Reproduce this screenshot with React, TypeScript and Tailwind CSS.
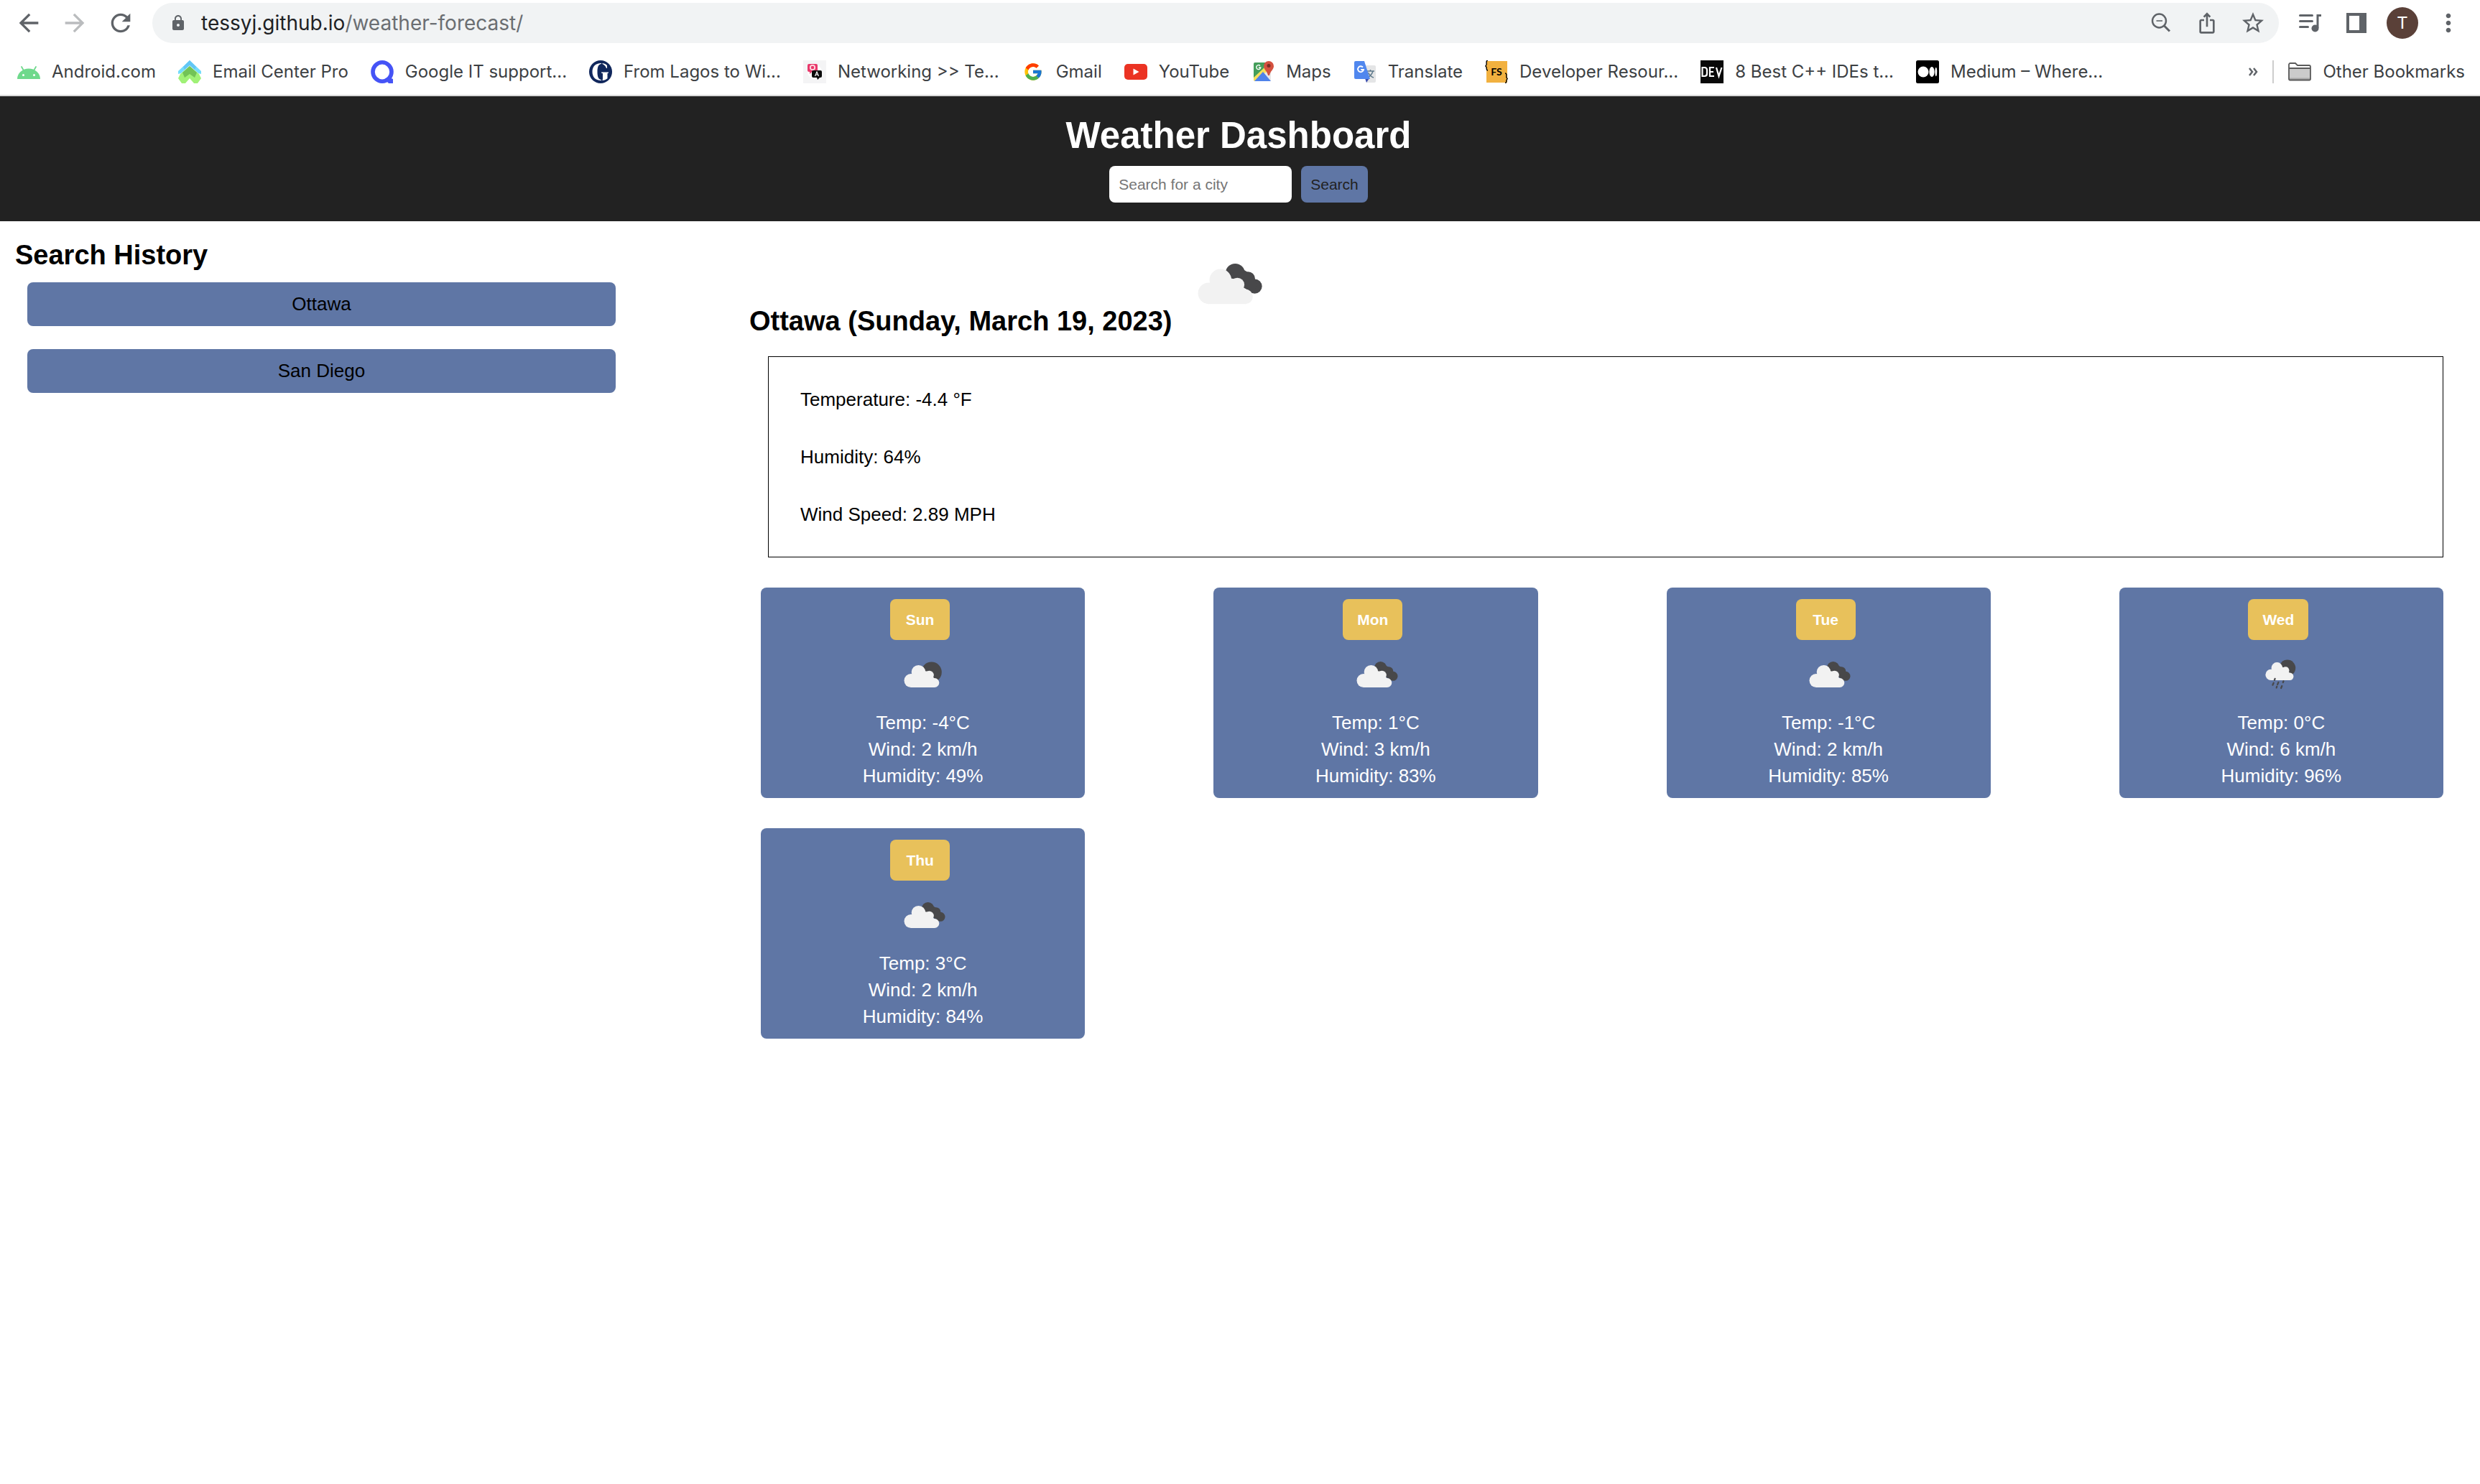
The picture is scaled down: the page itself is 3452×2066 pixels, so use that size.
import type { ReactNode } from "react";
import {
  MdArrowBack,
  MdArrowForward,
  MdIosShare,
  MdLock,
  MdMoreVert,
  MdRefresh,
  MdStarOutline,
} from "react-icons/md";
import { FcGoogle } from "react-icons/fc";

/* ---------- bookmark favicons (32 x 32) ---------- */

function Favicon({ children }: { children: ReactNode }) {
  return (
    <svg viewBox="0 0 32 32" className="size-8 shrink-0" aria-hidden="true">
      {children}
    </svg>
  );
}

const AndroidIcon = () => (
  <Favicon>
    <path d="M0 26a16 14.500 0 0 1 32 0z" fill="#6fd98c" />
    <path d="M6 9l4 7M26 9l-4 7" stroke="#6fd98c" strokeWidth="1.800" strokeLinecap="round" />
    <circle cx="8.500" cy="20.500" r="1.500" fill="#fff" />
    <circle cx="23.500" cy="20.500" r="1.500" fill="#fff" />
  </Favicon>
);

const EmailCenterIcon = () => (
  <Favicon>
    <path d="M16 0L0 15v4l4-1L16 7l12 11 4 1v-4z" fill="#74dcfb" />
    <path d="M16 0L7 9l2 4 7-6 7 6 2-4z" fill="#62c6f5" />
    <path d="M16 8L3 19l-3 6 5 7h5l6-7 6 7h5l5-7-3-6z" fill="#a0f177" />
    <path d="M16 8L6 17l3 7 7-5 7 5 3-7z" fill="#72c357" />
  </Favicon>
);

const CourseraIcon = () => (
  <Favicon>
    <ellipse cx="16" cy="16" rx="13" ry="13.200" fill="none" stroke="#4553f6" strokeWidth="5.600" />
    <path d="M19 26l7-2 5 2v6h-6z" fill="#4553f6" />
  </Favicon>
);

const GuardianIcon = () => (
  <Favicon>
    <circle cx="16" cy="16" r="16" fill="#10275c" />
    <path
      d="M17 4C8 4 4.500 9.500 4.500 16S8 28 17 28v-1c-4-.500-5.500-4-5.500-11S13 5.500 17 5zM18.500 4c3 .300 5 1.500 6.500 3v4h-1c-1.200-3.300-3-5-5.500-6zM17 16.500h10v1l-1.500.800v7C23.500 27 21 27.800 18.500 28v-1l.500-.500v-8.200l-2-.800z"
      fill="#fff"
    />
  </Favicon>
);

const NetworkingIcon = () => (
  <Favicon>
    <rect width="32" height="32" fill="#f4f4f5" />
    <circle cx="16" cy="16" r="10" fill="#fff" />
    <path d="M8 5h10a2 2 0 0 1 2 2v7a2 2 0 0 1-2 2h-6l-3 3v-3H8a2 2 0 0 1-2-2V7a2 2 0 0 1 2-2z" fill="#e8386b" />
    <circle cx="13" cy="10" r="3.200" fill="none" stroke="#ffd9e0" strokeWidth="1.800" />
    <path d="M14 14h10a2 2 0 0 1 2 2v6a2 2 0 0 1-2 2h-1l-3 3-1-3h-5a2 2 0 0 1-2-2v-6a2 2 0 0 1 2-2z" fill="#0a0a0a" />
    <path d="M16.500 22l2.500-6 2.500 6M17.500 20h3" fill="none" stroke="#fff" strokeWidth="1.200" />
  </Favicon>
);

const GmailIcon = () => (
  <span className="flex size-8 shrink-0 items-center justify-center">
    <FcGoogle className="size-7" aria-hidden="true" />
  </span>
);

const YouTubeIcon = () => (
  <Favicon>
    <rect y="5" width="32" height="22" rx="5" fill="#eb3323" />
    <path d="M12.500 11.500v9l8-4.500z" fill="#fff" />
  </Favicon>
);

const MapsIcon = () => (
  <Favicon>
    <path d="M5 3h16l6 12v12a2 2 0 0 1-2 2H5a2 2 0 0 1-2-2V5a2 2 0 0 1 2-2z" fill="#e8e8e8" />
    <path d="M5 3h16v8L3 27V5a2 2 0 0 1 2-2z" fill="#449e5a" />
    <path d="M18 10l4 5L5 29a2 2 0 0 1-2-2v-3z" fill="#f6df5c" />
    <path d="M16 16L4 29h23z" fill="#4f82ea" />
    <path d="M24 1a7 7 0 0 1 7 7c0 5-5 7-6 13h-2c-1-6-6-8-6-13a7 7 0 0 1 7-7z" fill="#d4513f" />
    <circle cx="24" cy="7.500" r="2.500" fill="#7c2d25" />
    <path d="M12 7.500a3 3 0 1 0 .800 2.500H10" fill="none" stroke="#fff" strokeWidth="1.400" />
  </Favicon>
);

const TranslateIcon = () => (
  <Favicon>
    <path d="M12 7h17a2 2 0 0 1 2 2v20a2 2 0 0 1-2 2H18z" fill="#e4e5e6" />
    <path d="M18 15h11M23.500 13v2M27 15c-1 4-4 7-7 9M20.500 17c1.500 3 4 6 7.500 7" fill="none" stroke="#5f7a8c" strokeWidth="1.500" />
    <path d="M16 25h6l-4 6z" fill="#3c4fb0" />
    <path d="M3 1h12l8 25H3a2 2 0 0 1-2-2V3a2 2 0 0 1 2-2z" fill="#5087ee" />
    <path d="M13 9.500a4 4 0 1 0 1 3.500h-3.800" fill="none" stroke="#fff" strokeWidth="1.900" />
  </Favicon>
);

const DeveloperIcon = () => (
  <Favicon>
    <rect x="2" y="1" width="29" height="30" fill="#f2b13f" />
    <path d="M4 0C1 0 2.500 4 2 6L.800 8 2 9.500C2.500 12 1.500 14 4 14" fill="none" stroke="#000" strokeWidth="1.400" />
    <path d="M28 18c3 0 1.500 4 2 6l1.200 1.500L30 27.500c-.500 2 .500 4-2 4" fill="none" stroke="#000" strokeWidth="1.400" />
    <text x="16" y="21" textAnchor="middle" fontSize="14" className="fill-black font-[Lato] font-bold">
      FS
    </text>
  </Favicon>
);

const DevIcon = () => (
  <Favicon>
    <rect width="32" height="32" fill="#090909" />
    <path
      d="M2.500 10v12h3q3.500 0 3.500-3.500v-5Q9 10 5.500 10zM19 10h-6v12h6M13 16h5M22 10l3.500 12L29.500 10"
      fill="none"
      stroke="#fff"
      strokeWidth="2.200"
    />
  </Favicon>
);

const MediumIcon = () => (
  <Favicon>
    <rect width="32" height="32" rx="2.500" fill="#000" />
    <circle cx="10" cy="16" r="7.500" fill="#fff" />
    <ellipse cx="22" cy="16" rx="3.600" ry="7" fill="#fff" />
    <ellipse cx="27.800" cy="16" rx="1.400" ry="6.200" fill="#fff" />
  </Favicon>
);

const FolderIcon = () => (
  <Favicon>
    <path d="M1 6a2 2 0 0 1 2-2h7l3 3h16a2 2 0 0 1 2 2v17a1.500 1.500 0 0 1-1.500 1.500h-27A1.500 1.500 0 0 1 1 26z" fill="#fff" />
    <path d="M1 11h30v16H1z" fill="#cbcbcb" />
    <path d="M1 24.500h30V27H1z" fill="#a9a9a9" />
    <path
      d="M1 6a2 2 0 0 1 2-2h7l3 3h16a2 2 0 0 1 2 2v17a1.500 1.500 0 0 1-1.500 1.500h-27A1.500 1.500 0 0 1 1 26zM1 11h30"
      fill="none"
      stroke="#5a5a5a"
      strokeWidth="1.800"
    />
  </Favicon>
);

const bookmarks = [
  { label: "Android.com", Icon: AndroidIcon },
  { label: "Email Center Pro", Icon: EmailCenterIcon },
  { label: "Google IT support...", Icon: CourseraIcon },
  { label: "From Lagos to Wi...", Icon: GuardianIcon },
  { label: "Networking >> Te...", Icon: NetworkingIcon },
  { label: "Gmail", Icon: GmailIcon },
  { label: "YouTube", Icon: YouTubeIcon },
  { label: "Maps", Icon: MapsIcon },
  { label: "Translate", Icon: TranslateIcon },
  { label: "Developer Resour...", Icon: DeveloperIcon },
  { label: "8 Best C++ IDEs t...", Icon: DevIcon },
  { label: "Medium – Where...", Icon: MediumIcon },
];

/* ---------- browser chrome ---------- */

function ToolButton({ label, children }: { label: string; children: ReactNode }) {
  return (
    <button type="button" aria-label={label} className="flex h-14 w-16 shrink-0 items-center justify-center">
      {children}
    </button>
  );
}

function Toolbar() {
  return (
    <div className="flex h-16 items-center gap-3 pr-3 pl-2 text-[#5f6368]">
      <div className="flex">
        <ToolButton label="Back">
          <MdArrowBack className="size-10" />
        </ToolButton>
        <ToolButton label="Forward">
          <MdArrowForward className="size-10 text-[#babcbe]" />
        </ToolButton>
        <ToolButton label="Reload">
          <MdRefresh className="size-10" />
        </ToolButton>
      </div>
      <div className="flex h-14 flex-1 items-center rounded-full bg-[#f1f3f4] pr-1 pl-6">
        <MdLock className="size-6" />
        <p className="ml-5 flex-1 text-[28px] leading-9 text-[#6b6e72]">
          <span className="text-[#202124]">tessyj.github.io</span>/weather-forecast/
        </p>
        <ToolButton label="Zoom">
          <svg viewBox="0 0 28 28" className="size-7" fill="none" stroke="currentColor" strokeWidth="2.400" aria-hidden="true">
            <circle cx="11.500" cy="11" r="9.500" />
            <path d="M7.500 11h8.500" strokeWidth="1.600" />
            <path d="M18.500 18l7.500 7.500" strokeWidth="3" />
          </svg>
        </ToolButton>
        <ToolButton label="Share">
          <MdIosShare className="size-8" />
        </ToolButton>
        <ToolButton label="Bookmark this page">
          <MdStarOutline className="size-9" />
        </ToolButton>
      </div>
      <div className="flex">
        <ToolButton label="Media">
          <svg viewBox="0 0 32 26" className="h-[26px] w-8" fill="none" stroke="currentColor" strokeWidth="3" strokeLinecap="round" aria-hidden="true">
            <path d="M1.500 2.500h17M1.500 10.500h17M1.500 18.500h11" />
            <path d="M26 20V2.500h5" strokeLinecap="butt" />
            <circle cx="22.500" cy="20.500" r="5" fill="currentColor" stroke="none" />
          </svg>
        </ToolButton>
        <ToolButton label="Side panel">
          <svg viewBox="0 0 28 28" className="size-7" aria-hidden="true">
            <path d="M0 0h28v28H0zM4 4v20h14V4z" fill="currentColor" fillRule="evenodd" />
          </svg>
        </ToolButton>
        <ToolButton label="Profile">
          <span className="flex size-11 items-center justify-center rounded-full bg-[#5a4038] font-[Roboto] text-2xl text-white">
            T
          </span>
        </ToolButton>
        <ToolButton label="Menu">
          <MdMoreVert className="size-10" />
        </ToolButton>
      </div>
    </div>
  );
}

function BookmarkLink({ label, Icon }: { label: string; Icon: () => ReactNode }) {
  return (
    <a href="#" className="flex shrink-0 items-center gap-4 whitespace-nowrap">
      <Icon />
      {label}
    </a>
  );
}

function BookmarksBar() {
  return (
    <nav
      aria-label="Bookmarks"
      className="flex items-center border-b-2 border-[#d9d9d9] pt-5 pr-[21px] pb-4 pl-6 text-2xl leading-8 text-[#3c4043]"
    >
      <div className="flex flex-1 gap-[31px]">
        {bookmarks.map((b) => (
          <BookmarkLink key={b.label} {...b} />
        ))}
      </div>
      <button type="button" aria-label="More bookmarks" className="mr-5">
        <svg viewBox="0 0 14 14" className="size-3.5" fill="none" stroke="#5f6368" strokeWidth="2.500" aria-hidden="true">
          <path d="M2 2l4 5-4 5M8 2l4 5-4 5" />
        </svg>
      </button>
      <div className="mr-5 h-8 w-0.5 bg-[#cdcdcd]" />
      <BookmarkLink label="Other Bookmarks" Icon={FolderIcon} />
    </nav>
  );
}

/* ---------- weather drawings ---------- */

const WhiteCloud = () => (
  <g fill="#f2f2f2">
    <circle cx="15" cy="40.500" r="9.500" />
    <circle cx="25.500" cy="28.700" r="9.800" />
    <circle cx="40.500" cy="33" r="6.300" />
    <circle cx="47.800" cy="43.500" r="6.500" />
    <path d="M15 50h33V38l-8-10-14-2-11 12z" />
  </g>
);

const cloudArt = {
  scattered: (
    <>
      <circle cx="43.600" cy="28.700" r="14.200" fill="#48484a" />
      <WhiteCloud />
    </>
  ),
  broken: (
    <>
      <g fill="#48484a">
        <circle cx="38.600" cy="22.600" r="8.600" />
        <circle cx="50" cy="27.500" r="6.300" />
        <circle cx="56" cy="34.300" r="6.500" />
        <path d="M42 17l13 8 3 9-4 6-14-8-6-8z" />
      </g>
      <WhiteCloud />
    </>
  ),
  rain: (
    <>
      <g transform="translate(6 0) scale(.8)">
        <circle cx="43.600" cy="28.700" r="14.200" fill="#48484a" />
        <WhiteCloud />
      </g>
      <path
        d="M23.600 37.800l-.700 2M35.500 41.200l-.700 2M21.700 43.700l-1.300 3M28.400 43l-1.300 3M26.300 48.700l-.600 1.800M33.300 48l-1.200 3"
        stroke="#48484a"
        strokeWidth="2.200"
        strokeLinecap="round"
      />
    </>
  ),
};

type Sky = keyof typeof cloudArt;

const skyNames: Record<Sky, string> = {
  scattered: "Scattered clouds",
  broken: "Broken clouds",
  rain: "Rain",
};

function SkyIcon({ sky, className }: { sky: Sky; className: string }) {
  return (
    <svg viewBox="0 0 64 64" className={className} role="img" aria-label={skyNames[sky]}>
      {cloudArt[sky]}
    </svg>
  );
}

/* ---------- page ---------- */

const forecast: { day: string; sky: Sky; temp: number; wind: number; humidity: number }[] = [
  { day: "Sun", sky: "scattered", temp: -4, wind: 2, humidity: 49 },
  { day: "Mon", sky: "broken", temp: 1, wind: 3, humidity: 83 },
  { day: "Tue", sky: "broken", temp: -1, wind: 2, humidity: 85 },
  { day: "Wed", sky: "rain", temp: 0, wind: 6, humidity: 96 },
  { day: "Thu", sky: "broken", temp: 3, wind: 2, humidity: 84 },
];

const history = ["Ottawa", "San Diego"];
const conditions = ["Temperature: -4.4 °F", "Humidity: 64%", "Wind Speed: 2.89 MPH"];

function PageHeader() {
  return (
    <header className="flex flex-col items-center bg-[#222222] py-[26px] pr-6 pl-5">
      <h1 className="text-[51px] leading-[58px] font-bold text-white">Weather Dashboard</h1>
      <form className="mt-[13px] flex gap-[13px] text-[21px] leading-6" onSubmit={(e) => e.preventDefault()}>
        <input
          type="text"
          aria-label="City"
          placeholder="Search for a city"
          className="h-[51px] w-[254px] rounded-lg bg-white px-[13px] text-black placeholder:text-[#757575]"
        />
        <button type="submit" className="h-[51px] rounded-lg bg-[#5f76a5] px-[13px] text-[#222222]">
          Search
        </button>
      </form>
    </header>
  );
}

function SearchHistory() {
  return (
    <aside className="w-1/4 shrink-0 pt-[25px]">
      <h2 className="px-[21px] text-[38px] leading-[44px] font-bold">Search History</h2>
      <ul className="mt-4 flex flex-col gap-8 pr-1.5 pl-[38px]">
        {history.map((city) => (
          <li key={city}>
            <button type="button" className="h-[61px] w-full rounded-lg bg-[#5f76a5] text-[26px]">
              {city}
            </button>
          </li>
        ))}
      </ul>
    </aside>
  );
}

function ForecastCard({ day, sky, temp, wind, humidity }: (typeof forecast)[number]) {
  return (
    <article className="flex flex-col items-center rounded-lg bg-[#5f76a5] pt-4 pb-3 text-center text-[26px] leading-[37px] text-white">
      <h3 className="mr-2 flex h-[57px] min-w-[83px] items-center justify-center rounded-lg bg-[#e8c15b] px-5 text-[21px] font-bold">
        {day}
      </h3>
      <SkyIcon sky={sky} className="mt-4 mb-[17px] size-16" />
      <p>Temp: {temp}°C</p>
      <p>Wind: {wind} km/h</p>
      <p>Humidity: {humidity}%</p>
    </article>
  );
}

export default function App() {
  return (
    <div className="min-h-screen bg-white font-['Liberation_Sans',Arial,sans-serif] text-black">
      <div className="font-[Inter,sans-serif]">
        <Toolbar />
        <BookmarksBar />
      </div>
      <PageHeader />
      <div className="flex">
        <SearchHistory />
        <main className="flex-1 pt-[37px] pr-[51px] pl-[180px]">
          <div className="flex items-end gap-[27px]">
            <h2 className="text-[38px] leading-[44px] font-bold">Ottawa (Sunday, March 19, 2023)</h2>
            <SkyIcon sky="broken" className="mb-6 size-[100px]" />
          </div>
          <ul className="mt-[27px] ml-[26px] border border-black px-11 py-[19px] text-[26px] leading-[80px]">
            {conditions.map((line) => (
              <li key={line}>{line}</li>
            ))}
          </ul>
          <section aria-label="Forecast" className="mt-[42px] ml-4 grid grid-cols-4 gap-x-[179px] gap-y-[42px]">
            {forecast.map((f) => (
              <ForecastCard key={f.day} {...f} />
            ))}
          </section>
        </main>
      </div>
    </div>
  );
}
